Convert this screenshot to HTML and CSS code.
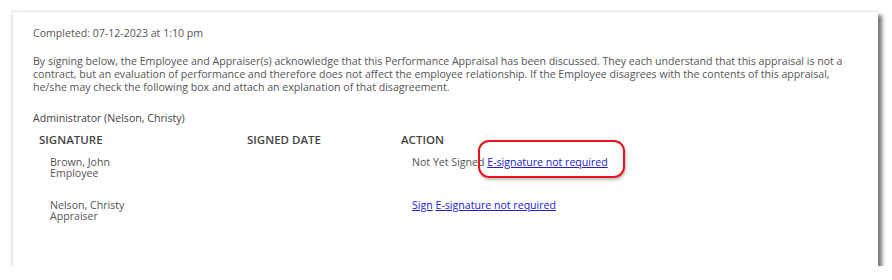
FILE: index.html
```html
<!DOCTYPE html>
<html lang="en">
<head>
    <meta charset="UTF-8">
    <title>Appraisal Signatures</title>
    <link rel="stylesheet" href="styles.css">
</head>
<body>
    <div class="card">
        <div class="completed">Completed: 07-12-2023 at 1:10 pm</div>
        <p class="notice">By signing below, the Employee and Appraiser(s) acknowledge that this Performance Appraisal has been discussed. They each understand that this appraisal is not a contract, but an evaluation of performance and therefore does not affect the employee relationship. If the Employee disagrees with the contents of this appraisal, he/she may check the following box and attach an explanation of that disagreement.</p>
        <div class="admin">Administrator (Nelson, Christy)</div>

        <div class="sig-table">
            <div class="head">SIGNATURE</div>
            <div class="head">SIGNED DATE</div>
            <div class="head">ACTION</div>

            <div class="who">
                <div>Brown, John</div>
                <div class="role">Employee</div>
            </div>
            <div class="date"></div>
            <div class="action">
                Not Yet Signed <span class="marked"><a href="#">E-signature not required</a><span class="callout"></span></span>
            </div>

            <div class="who">
                <div>Nelson, Christy</div>
                <div class="role">Appraiser</div>
            </div>
            <div class="date"></div>
            <div class="action">
                <a href="#">Sign</a> <a href="#">E-signature not required</a>
            </div>
        </div>
    </div>
</body>
</html>
```

FILE: styles.css
```css
body {
    margin: 0;
    background-color: #fff;
    font-family: "Open Sans", "Liberation Sans", sans-serif;
    font-size: 10.6px;
    color: #555;
}

.card {
    margin: 11px 0 0 12px;
    width: 866px;
    height: 255px;
    box-sizing: border-box;
    padding: 14px 20px 0 20px;
    background-color: #fff;
    border-top: 1px solid #e4e4e4;
    border-left: 1px solid #e4e4e4;
    box-shadow: 4px 4px 4px rgba(0, 0, 0, 0.55), -2px 0 3px rgba(0, 0, 0, 0.06);
}

.completed {
    line-height: 14px;
}

.notice {
    margin: 15px 0 0 0;
    line-height: 13px;
}

.admin {
    margin-top: 17px;
    line-height: 14px;
    color: #444;
}

.sig-table {
    display: grid;
    grid-template-columns: 208px 154px 1fr;
    margin-top: 7px;
    margin-left: 6px;
}

.head {
    font-size: 11.5px;
    font-weight: 600;
    color: #444;
    line-height: 16px;
}

.who {
    padding-left: 11px;
    padding-top: 9px;
    height: 34px;
    line-height: 11px;
}

.action {
    padding-left: 11px;
    padding-top: 9px;
    line-height: 11px;
}

.action a {
    color: #2020d8;
}

.marked {
    position: relative;
}

.callout {
    position: absolute;
    left: -9px;
    right: -17px;
    top: -15px;
    bottom: -9px;
    border: 2px solid #e8141a;
    border-radius: 11px;
    box-shadow: 1px 2px 3px rgba(0, 0, 0, 0.25);
}
```
